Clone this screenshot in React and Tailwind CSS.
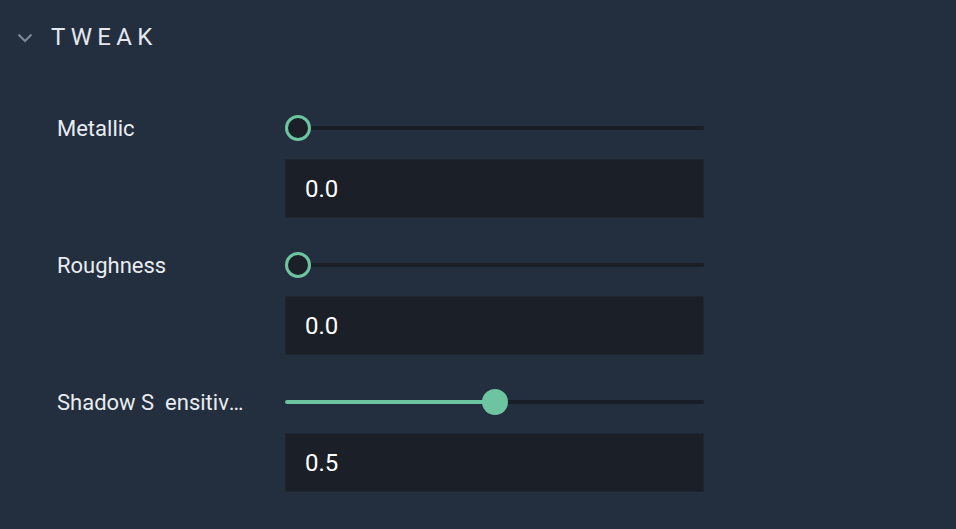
const rows = [
  { label: "Metallic", value: 0, text: "0.0" },
  { label: "Roughness", value: 0, text: "0.0" },
  { label: "Shadow S  ensitivity", value: 0.5, text: "0.5" },
];

// slider thumb travels 393px across a 419px track
const Slider = ({ value }) => {
  const filled = value > 0;
  return (
    <div className="relative h-[26px] w-[419px] flex items-center">
      <div className="h-[4px] w-full rounded-full bg-[#191e27]" />
      {filled && (
        <div
          className="absolute left-0 h-[4px] rounded-full bg-[#6cc4a0]"
          style={{ width: 13 + value * 393 }}
        />
      )}
      <div
        className={
          filled
            ? "absolute top-0 h-[26px] w-[26px] rounded-full bg-[#6cc4a0]"
            : "absolute top-0 h-[26px] w-[26px] rounded-full border-[3px] border-[#6cc4a0] bg-[#1a1f28]"
        }
        style={{ left: value * 393 }}
      />
    </div>
  );
};

const App = () => {
  return (
    <div
      className="w-[956px] h-[529px] bg-[#232e3e] text-white overflow-hidden"
      style={{ fontFamily: "Roboto, 'Liberation Sans', sans-serif" }}
    >
      <div className="flex items-center h-[74px] pl-[17px]">
        <svg width="16" height="10" viewBox="0 0 16 10" className="mt-[2px]">
          <path d="M1.5 1.5 L8 8 L14.5 1.5" fill="none" stroke="#7d8694" strokeWidth="2.2" />
        </svg>
        <div className="ml-[18px] text-[24px] tracking-[0.22em] text-[#e4e8ee]">TWEAK</div>
      </div>

      <div className="flex flex-col gap-[34px] pl-[57px] pt-[41px]">
        {rows.map((row) => (
          <div key={row.label} className="flex">
            <div className="w-[228px] h-[26px] flex items-center text-[22px] text-[#e8ecf1]">
              <span className="block w-[190px] overflow-hidden text-ellipsis whitespace-pre">
                {row.label}
              </span>
            </div>
            <div className="flex flex-col gap-[18px]">
              <Slider value={row.value} />
              <div className="w-[419px] h-[59px] bg-[#1a1f28] border border-[#1f2632] flex items-center pl-[19px] text-[24px] text-white">
                {row.text}
              </div>
            </div>
          </div>
        ))}
      </div>
    </div>
  );
};

export default App;
